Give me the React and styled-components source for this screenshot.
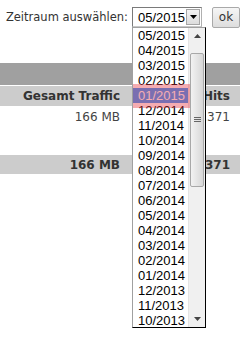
import React from "react";
import styled, { createGlobalStyle } from "styled-components";

const months = [
  "05/2015", "04/2015", "03/2015", "02/2015", "01/2015",
  "12/2014", "11/2014", "10/2014", "09/2014", "08/2014", "07/2014",
  "06/2014", "05/2014", "04/2014", "03/2014", "02/2014", "01/2014",
  "12/2013", "11/2013", "10/2013",
];

const Global = createGlobalStyle`
  body {
    margin: 0;
    background: #fff;
    font-family: "DejaVu Sans", Verdana, sans-serif;
  }
`;

const Page = styled.div`
  width: 246px;
  height: 337px;
  overflow: hidden;
`;

const Toolbar = styled.div`
  display: flex;
  align-items: center;
  justify-content: flex-end;
  padding: 7px 6px 0 0;
  height: 20px;
`;

const Label = styled.span`
  font-size: 11.5px;
  color: #333;
  margin-right: 4px;
  white-space: nowrap;
`;

const SelectWrap = styled.div`
  position: relative;
  flex: none;
  width: 70px;
  height: 20px;
  margin-right: 10px;
`;

const Select = styled.div`
  box-sizing: border-box;
  height: 20px;
  border: 1px solid #7a7a7a;
  border-right-color: #b0b0b0;
  border-bottom-color: #c8c8c8;
  display: flex;
  align-items: center;
  justify-content: space-between;
  padding: 0 1px 0 5px;
  font-family: "Liberation Sans", Arial, sans-serif;
  font-size: 13px;
  color: #000;
  background: #fff;
`;

const ArrowButton = styled.div`
  box-sizing: border-box;
  width: 14px;
  height: 16px;
  border: 1px solid #a5a5a5;
  background: linear-gradient(#f4f4f4, #dcdcdc);
  display: flex;
  align-items: center;
  justify-content: center;
`;

const List = styled.div`
  position: absolute;
  top: 100%;
  left: 0;
  width: 74px;
  height: 301px;
  box-sizing: border-box;
  border: 1px solid #000;
  border-left-color: #a0a0a0;
  border-top-color: #a0a0a0;
  background: #fff;
  display: flex;
  z-index: 5;
`;

const Items = styled.div`
  flex: 1;
  display: flex;
  flex-direction: column;
`;

const Item = styled.div`
  height: 15px;
  line-height: 15px;
  padding-left: 5px;
  font-family: "Liberation Sans", Arial, sans-serif;
  font-size: 13px;
  color: ${(p) => (p.$active ? "#fff" : "#000")};
  background: ${(p) => (p.$active ? "#3399ff" : "transparent")};
`;

const Scrollbar = styled.div`
  width: 16px;
  background: #f0f0f0;
  display: flex;
  flex-direction: column;
  align-items: center;
  border-left: 1px solid #e4e4e4;
`;

const ScrollArrow = styled.div`
  height: 16px;
  display: flex;
  align-items: center;
  justify-content: center;
`;

const Thumb = styled.div`
  box-sizing: border-box;
  width: 14px;
  height: 134px;
  margin-top: 9px;
  border: 1px solid #a8a8a8;
  border-radius: 2px;
  background: linear-gradient(90deg, #f2f2f2, #e2e2e2 60%, #d6d6d6);
  display: flex;
  align-items: center;
  justify-content: center;
`;

const Spacer = styled.div`
  flex: 1;
`;

const Mark = styled.div`
  position: absolute;
  left: 0;
  top: 56px;
  width: 57px;
  height: 24px;
  background: rgba(231, 48, 60, 0.4);
  pointer-events: none;
`;

const OkButton = styled.button`
  box-sizing: border-box;
  flex: none;
  width: 28px;
  height: 21px;
  padding: 0;
  border: 1px solid #a9a9a9;
  border-radius: 2px;
  background: linear-gradient(#f6f6f6, #dddddd);
  font-family: "DejaVu Sans", Verdana, sans-serif;
  font-size: 12px;
  color: #333;
`;

const Table = styled.table`
  margin-top: 36px;
  width: 240px;
  border-collapse: collapse;
  font-size: 12px;
  color: #444;
`;

const Band = styled.tr`
  height: 22px;
  background: #a0a0a0;
  border-bottom: 1px solid #fff;
`;

const HeadRow = styled.tr`
  height: 21px;
  background: #cccccc;
  th {
    font-weight: bold;
    color: #333;
    text-align: right;
    padding: 0 10px 0 0;
    white-space: nowrap;
  }
`;

const Row = styled.tr`
  height: ${(p) => p.$h}px;
  background: ${(p) => (p.$total ? "#cccccc" : "#fff")};
  td {
    text-align: right;
    vertical-align: ${(p) => (p.$top ? "top" : "middle")};
    padding: ${(p) => (p.$top ? "4px 10px 0 0" : "0 10px 0 0")};
    font-weight: ${(p) => (p.$total ? "bold" : "normal")};
    color: ${(p) => (p.$total ? "#333" : "#444")};
    white-space: nowrap;
  }
`;

export default function App() {
  return (
    <Page>
      <Global />
      <Toolbar>
        <Label>Zeitraum auswählen:</Label>
        <SelectWrap>
          <Select>
            05/2015
            <ArrowButton>
              <svg width="7" height="4" viewBox="0 0 7 4">
                <path d="M0 0h7L3.5 4z" fill="#000" />
              </svg>
            </ArrowButton>
          </Select>
          <List>
            <Items>
              {months.map((m, i) => (
                <Item key={m} $active={i === 4}>
                  {m}
                </Item>
              ))}
            </Items>
            <Scrollbar>
              <ScrollArrow>
                <svg width="7" height="4" viewBox="0 0 7 4">
                  <path d="M0 4h7L3.5 0z" fill="#444" />
                </svg>
              </ScrollArrow>
              <Thumb>
                <svg width="7" height="6" viewBox="0 0 7 6">
                  <path d="M0 .5h7M0 2.5h7M0 4.5h7" stroke="#666" />
                </svg>
              </Thumb>
              <Spacer />
              <ScrollArrow>
                <svg width="7" height="4" viewBox="0 0 7 4">
                  <path d="M0 0h7L3.5 4z" fill="#444" />
                </svg>
              </ScrollArrow>
            </Scrollbar>
            <Mark />
          </List>
        </SelectWrap>
        <OkButton>ok</OkButton>
      </Toolbar>
      <Table>
        <tbody>
          <Band>
            <td colSpan={2} />
          </Band>
          <HeadRow>
            <th style={{ width: 120 }}>Gesamt Traffic</th>
            <th>Hits</th>
          </HeadRow>
          <Row $h={49} $top>
            <td>166 MB</td>
            <td>1.371</td>
          </Row>
          <Row $h={19} $total>
            <td>166 MB</td>
            <td>1.371</td>
          </Row>
        </tbody>
      </Table>
    </Page>
  );
}
